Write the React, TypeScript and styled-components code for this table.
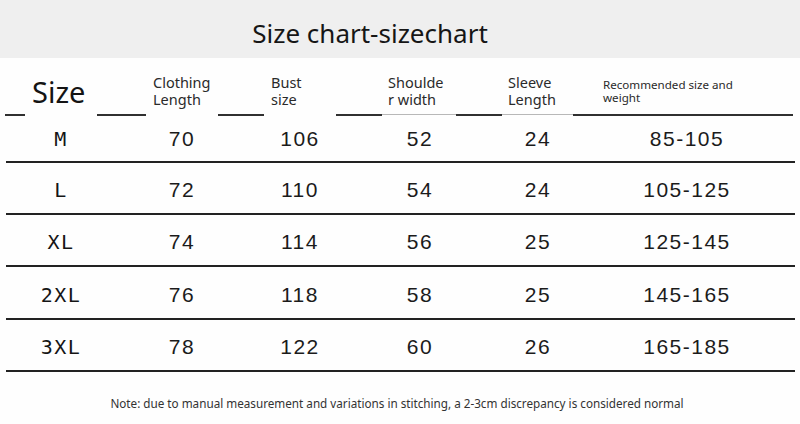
import React from "react";
import styled, { createGlobalStyle } from "styled-components";

const Global = createGlobalStyle`
  html, body { margin: 0; padding: 0; background: #ffffff; }
  body { width: 800px; height: 424px; overflow: hidden; font-family: "Noto Sans", sans-serif; }
`;

const Page = styled.div`
  width: 800px;
  height: 424px;
  background: #fefefe;
  display: flex;
  flex-direction: column;
`;

const Banner = styled.div`
  height: 58px;
  box-sizing: border-box;
  padding: 20px 60px 0 0;
  background: #efefef;
  text-align: center;
`;

const Title = styled.h1`
  margin: 0;
  font-family: "Noto Sans", sans-serif;
  font-weight: 400;
  font-size: 26px;
  line-height: 26px;
  color: #161616;
`;

const COLS = "110px 132px 104px 136px 100px 198px 1fr";

const Header = styled.div`
  height: 56px;
  flex-shrink: 0;
  margin-left: 6px;
  width: 789px;
  display: grid;
  grid-template-columns: ${COLS};
  align-items: start;
`;

const SizeHead = styled.div`
  padding: 19px 0 0 26px;
  font-family: "Noto Sans", sans-serif;
  font-size: 29px;
  line-height: 29px;
  color: #141414;
`;

const HeadCell = styled.div<{ $pad: number; $small?: boolean }>`
  padding-left: ${(p) => p.$pad}px;
  padding-top: ${(p) => (p.$small ? 19.5 : 16)}px;
  font-family: "Noto Sans", sans-serif;
  font-size: ${(p) => (p.$small ? 11.6 : 14.5)}px;
  line-height: ${(p) => (p.$small ? 13 : 17)}px;
  color: #2a2a2a;
  white-space: nowrap;
`;

const Underline = styled.div`
  display: flex;
  flex-shrink: 0;
  height: 2px;
  margin-left: 5px;
`;

const Seg = styled.div<{ $w: number; $tone: "dark" | "light" | "none" }>`
  width: ${(p) => p.$w}px;
  height: ${(p) => (p.$tone === "light" ? 1 : 2)}px;
  background: ${(p) =>
    p.$tone === "dark" ? "#303030" : p.$tone === "light" ? "#b8b8b8" : "transparent"};
`;

const Row = styled.div<{ $h: number; $pt: number }>`
  height: ${(p) => p.$h + 2}px;
  flex-shrink: 0;
  box-sizing: border-box;
  padding-top: ${(p) => p.$pt}px;
  margin-left: 6px;
  width: 789px;
  display: grid;
  grid-template-columns: ${COLS};
  align-items: center;
  border-bottom: 2px solid #222;
`;

const SizeCell = styled.div`
  text-align: center;
  font-family: "DejaVu Sans Mono", monospace;
  font-size: 20px;
  letter-spacing: 1.5px;
  color: #151515;
`;

const Value = styled.div`
  text-align: center;
  font-family: "Liberation Sans", Arial, sans-serif;
  font-size: 21px;
  letter-spacing: 1.5px;
  color: #1b1b1b;
`;

const Note = styled.p`
  margin: 23px 0 0;
  padding-right: 6px;
  text-align: center;
  font-family: "Noto Sans", sans-serif;
  font-size: 11.7px;
  line-height: 16px;
  color: #333;
`;

const segments: Array<[number, "dark" | "light" | "none"]> = [
  [20, "dark"],
  [72, "none"],
  [49, "dark"],
  [72, "none"],
  [46, "dark"],
  [72, "none"],
  [46, "dark"],
  [74, "light"],
  [46, "dark"],
  [71, "light"],
  [220, "dark"],
];

const rows = [
  { size: "M", v: ["70", "106", "52", "24", "85-105"], h: 45, pt: 0 },
  { size: "L", v: ["72", "110", "54", "24", "105-125"], h: 50, pt: 4 },
  { size: "XL", v: ["74", "114", "56", "25", "125-145"], h: 50, pt: 4 },
  { size: "2XL", v: ["76", "118", "58", "25", "145-165"], h: 51, pt: 4 },
  { size: "3XL", v: ["78", "122", "60", "26", "165-185"], h: 50, pt: 4 },
];

export default function App() {
  return (
    <Page>
      <Global />
      <Banner>
        <Title>Size chart-sizechart</Title>
      </Banner>
      <Header>
        <SizeHead>Size</SizeHead>
        <HeadCell $pad={37}>Clothing<br />Length</HeadCell>
        <HeadCell $pad={23}>Bust<br />size</HeadCell>
        <HeadCell $pad={36}>Shoulde<br />r width</HeadCell>
        <HeadCell $pad={20}>Sleeve<br />Length</HeadCell>
        <HeadCell $pad={15} $small>Recommended size and<br />weight</HeadCell>
      </Header>
      <Underline>
        {segments.map(([w, t], i) => (
          <Seg key={i} $w={w} $tone={t} />
        ))}
      </Underline>
      {rows.map((r) => (
        <Row key={r.size} $h={r.h} $pt={r.pt}>
          <SizeCell>{r.size}</SizeCell>
          {r.v.map((x, i) => (
            <Value key={i}>{x}</Value>
          ))}
        </Row>
      ))}
      <Note>
        Note: due to manual measurement and variations in stitching, a 2-3cm discrepancy is considered normal
      </Note>
    </Page>
  );
}
